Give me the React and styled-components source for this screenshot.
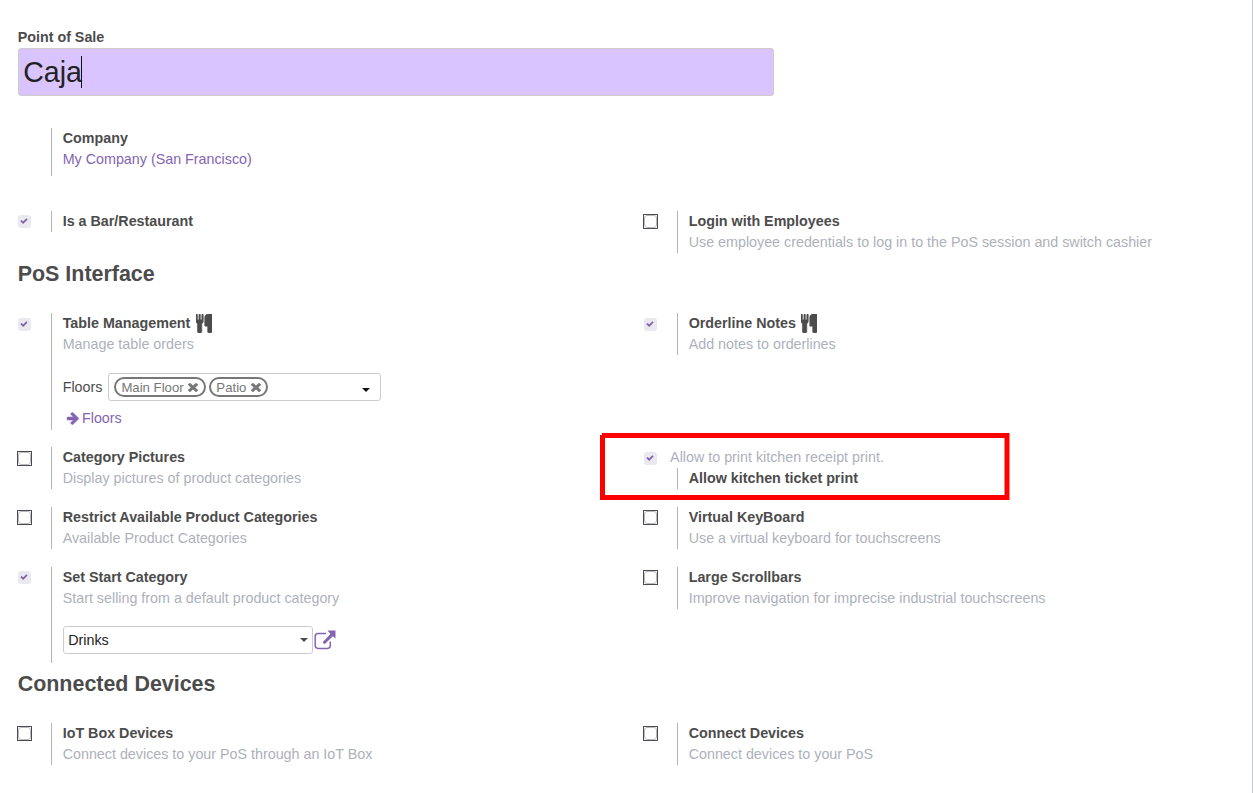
import React from "react";
import styled, { createGlobalStyle } from "styled-components";

const GlobalStyle = createGlobalStyle`
  *, *::before, *::after { box-sizing: border-box; }
  body {
    margin: 0;
    background: #fff;
    color: #4c4c4c;
    font: 14.3px/21px "Liberation Sans", Arial, sans-serif;
  }
`;

const Sheet = styled.main`
  height: 793px;
  overflow: hidden;
  padding: 27px 0 0 17.700px;
  border-right: 1px solid #c8c8d3;
`;

const FieldLabel = styled.label`
  display: block;
  font-weight: bold;
`;

const NameField = styled.div`
  display: flex;
  align-items: center;
  width: 756px;
  height: 48px;
  padding: 0 4.500px;
  border: 1px solid #ccc;
  border-radius: 3px;
  background: #d9c4ff;
  color: #222;
  font-size: 28.6px;
  line-height: 32px;
`;

const Caret = styled.span`
  width: 1px;
  height: 32px;
  margin-left: -0.700px;
  background: #111;
`;

const Row = styled.div`
  display: grid;
  grid-template-columns: 626px 1fr;
  align-items: start;
  margin-top: ${(p) => p.$gap}px;
`;

const SettingBox = styled.section`
  display: flex;
  align-items: flex-start;
`;

const CheckSlot = styled.div`
  flex: none;
  display: flex;
  width: 33px;
  padding-top: ${(p) => (p.$low ? 5 : 4)}px;
`;

const CheckedBox = styled.span`
  display: flex;
  align-items: center;
  justify-content: center;
  width: 13px;
  height: 13px;
  padding-bottom: 1px;
  border-radius: 3px;
  background: #e9e9ef;
  color: #7c5fae;
`;

const EmptyBox = styled.span`
  display: block;
  width: 15px;
  height: 15px;
  margin: -1px 0 0 -1px;
  border: 1px solid #4c4c4c;
  background: #fff;

  &::before {
    content: "";
    display: block;
    width: 13px;
    height: 13px;
    border: 1px solid #b9bcc4;
    border-radius: 3px;
  }
`;

const Pane = styled.div`
  min-height: ${(p) => p.$height || 0}px;
  padding-left: 11px;
  border-left: 1px solid #b3b3b3;
`;

const Title = styled.div`
  display: flex;
  align-items: center;
  height: 21px;
  gap: 5.500px;
  font-weight: bold;
  white-space: nowrap;
`;

const Muted = styled.div`
  color: #adb1bb;
  white-space: nowrap;
`;

const Link = styled.a`
  display: flex;
  align-items: center;
  gap: 3px;
  color: #8465b2;
`;

const FloorsLink = styled(Link)`
  margin: 7px 0 0 3.300px;
`;

const Heading = styled.h2`
  margin: ${(p) => p.$gap}px 0 0;
  font-size: 21.45px;
  line-height: 26px;
`;

const FloorField = styled.div`
  display: flex;
  align-items: center;
  margin-top: 18px;
`;

const FloorLabel = styled.span`
  width: 45px;
`;

const TagInput = styled.div`
  display: flex;
  align-items: center;
  gap: 3px;
  width: 273px;
  height: 28px;
  padding: 0 9.500px 0 5px;
  border: 1px solid #ccc;
  border-radius: 3px;
`;

const Tag = styled.span`
  display: flex;
  align-items: center;
  gap: 4.500px;
  height: 20px;
  padding: 1px 5.500px 0 5.700px;
  border: 2px solid #777;
  border-radius: 10px;
  color: #777;
  font-size: 13.2px;
  line-height: 16px;
`;

const Arrow = styled.span`
  margin: ${(p) => (p.$low ? "5px" : "0")} 0 0 auto;
  border: solid transparent;
  border-width: 4px 4px 0;
  border-top-color: ${(p) => p.$color || "#4c4c4c"};
`;

const SelectLine = styled.div`
  display: flex;
  align-items: center;
  gap: 1.300px;
  margin-top: 17px;
  color: #8465b2;
`;

const Select = styled.div`
  display: flex;
  align-items: center;
  width: 250px;
  height: 28px;
  padding: 0 4px 0 4.500px;
  border: 1px solid #ccc;
  border-radius: 3px;
  color: #222;
`;

const TicketBox = styled.section`
  position: relative;
  display: flex;
  align-items: flex-start;
`;

const TicketText = styled.div`
  margin-left: -6.600px;
`;

const TicketPane = styled(Pane)`
  margin-left: 6.600px;
`;

const RedFrame = styled.svg`
  position: absolute;
  left: -43.700px;
  top: -14px;
  overflow: visible;
`;

const Glyph = styled.svg`
  display: block;
  flex: none;
  fill: currentColor;
`;

const paths = {
  cutlery:
    "M640 64v640q0 61-35.500 111t-92.500 70v779q0 52-38 90t-90 38h-128q-52 0-90-38t-38-90v-779q-57-20-92.500-70t-35.500-111v-640q0-26 19-45t45-19 45 19 19 45v416q0 26 19 45t45 19 45-19 19-45v-416q0-26 19-45t45-19 45 19 19 45v416q0 26 19 45t45 19 45-19 19-45v-416q0-26 19-45t45-19 45 19 19 45zm768 0v1600q0 52-38 90t-90 38h-128q-52 0-90-38t-38-90v-512h-224q-13 0-22.500-9.500t-9.500-22.500v-800q0-132 94-226t226-94h256q26 0 45 19t19 45z",
  times:
    "M1490 1322q0 40-28 68l-136 136q-28 28-68 28t-68-28l-294-294-294 294q-28 28-68 28t-68-28l-136-136q-28-28-28-68t28-68l294-294-294-294q-28-28-28-68t28-68l136-136q28-28 68-28t68 28l294 294 294-294q28-28 68-28t68 28l136 136q28 28 28 68t-28 68l-294 294 294 294q28 28 28 68z",
  arrow:
    "M1600 960q0 54-37 91l-651 651q-39 37-91 37-51 0-90-37l-75-75q-38-38-38-91t38-91l293-293h-704q-52 0-84.500-37.500t-32.500-90.500v-128q0-53 32.500-90.500t84.500-37.500h704l-293-294q-38-36-38-90t38-90l75-75q38-38 90-38 53 0 91 38l651 651q37 35 37 90z",
  check:
    "M1671 566q0 40-28 68l-724 724-136 136q-28 28-68 28t-68-28l-136-136-362-362q-28-28-28-68t28-68l136-136q28-28 68-28t68 28l294 295 656-657q28-28 68-28t68 28l136 136q28 28 28 68z",
};

const Cutlery = () => (
  <Glyph width="16" height="19" viewBox="0 0 1408 1792" preserveAspectRatio="none">
    <path d={paths.cutlery} stroke="currentColor" strokeWidth="50" />
  </Glyph>
);

const Times = () => (
  <Glyph width="10" height="9" viewBox="302 366 1188 1188" preserveAspectRatio="none">
    <path d={paths.times} />
  </Glyph>
);

const External = () => (
  <Glyph width="22" height="20" viewBox="0 -0.6 22 20">
    <path
      d="M12 3H4Q1.200 3 1.200 5.800V15Q1.200 17.800 4 17.800H13.500Q16.300 17.800 16.300 15V11"
      fill="none"
      stroke="currentColor"
      strokeWidth="1.500"
    />
    <path d="M13.500 0H21.500V8L18.800 5.600L10.600 13.600L8.600 11.600L16.400 3.400Z" />
  </Glyph>
);

const Check = ({ on, low }) => (
  <CheckSlot $low={low}>
    {on ? (
      <CheckedBox>
        <Glyph width="8" height="8" viewBox="0 0 1792 1792">
          <path d={paths.check} />
        </Glyph>
      </CheckedBox>
    ) : (
      <EmptyBox />
    )}
  </CheckSlot>
);

const Setting = ({ on, low, title, help, icon, height, children }) => (
  <SettingBox>
    <Check on={on} low={low} />
    <Pane $height={height}>
      <Title>
        {title}
        {icon && <Cutlery />}
      </Title>
      {help && <Muted>{help}</Muted>}
      {children}
    </Pane>
  </SettingBox>
);

export default function App() {
  return (
    <>
      <GlobalStyle />
      <Sheet>
        <FieldLabel>Point of Sale</FieldLabel>
        <NameField>
          Caja
          <Caret />
        </NameField>

        <Row $gap={32}>
          <SettingBox>
            <CheckSlot />
            <Pane $height={48}>
              <Title>Company</Title>
              <Link>My Company (San Francisco)</Link>
            </Pane>
          </SettingBox>
        </Row>

        <Row $gap={35}>
          <Setting on title="Is a Bar/Restaurant" />
          <Setting
            title="Login with Employees"
            help="Use employee credentials to log in to the PoS session and switch cashier"
          />
        </Row>

        <Heading $gap={8}>PoS Interface</Heading>

        <Row $gap={26}>
          <Setting on low icon title="Table Management" help="Manage table orders" height={117}>
            <FloorField>
              <FloorLabel>Floors</FloorLabel>
              <TagInput>
                <Tag>
                  Main Floor <Times />
                </Tag>
                <Tag>
                  Patio <Times />
                </Tag>
                <Arrow $low $color="#111" />
              </TagInput>
            </FloorField>
            <FloorsLink>
              <Glyph width="13" height="13" viewBox="64 128 1536 1664">
                <path d={paths.arrow} stroke="currentColor" strokeWidth="70" />
              </Glyph>
              Floors
            </FloorsLink>
          </Setting>
          <Setting on low icon title="Orderline Notes" help="Add notes to orderlines" />
        </Row>

        <Row $gap={17}>
          <Setting low title="Category Pictures" help="Display pictures of product categories" />
          <TicketBox>
            <Check on low />
            <TicketText>
              <Muted>Allow to print kitchen receipt print.</Muted>
              <TicketPane>
                <Title>Allow kitchen ticket print</Title>
              </TicketPane>
            </TicketText>
            <RedFrame width="410" height="67">
              <path
                d="M2.500 2.500H407V64.500H2.500Z M2.500 2.500"
                fill="none"
                stroke="#f00"
                strokeWidth="5"
                strokeLinejoin="miter"
              />
              <path d="M0 0H2V2H0Z" fill="#fff" />
            </RedFrame>
          </TicketBox>
        </Row>

        <Row $gap={18}>
          <Setting title="Restrict Available Product Categories" help="Available Product Categories" />
          <Setting title="Virtual KeyBoard" help="Use a virtual keyboard for touchscreens" />
        </Row>

        <Row $gap={18}>
          <Setting
            on
            title="Set Start Category"
            help="Start selling from a default product category"
            height={96}
          >
            <SelectLine>
              <Select>
                Drinks
                <Arrow />
              </Select>
              <External />
            </SelectLine>
          </Setting>
          <Setting title="Large Scrollbars" help="Improve navigation for imprecise industrial touchscreens" />
        </Row>

        <Heading $gap={8}>Connected Devices</Heading>

        <Row $gap={26}>
          <Setting title="IoT Box Devices" help="Connect devices to your PoS through an IoT Box" />
          <Setting title="Connect Devices" help="Connect devices to your PoS" />
        </Row>
      </Sheet>
    </>
  );
}
